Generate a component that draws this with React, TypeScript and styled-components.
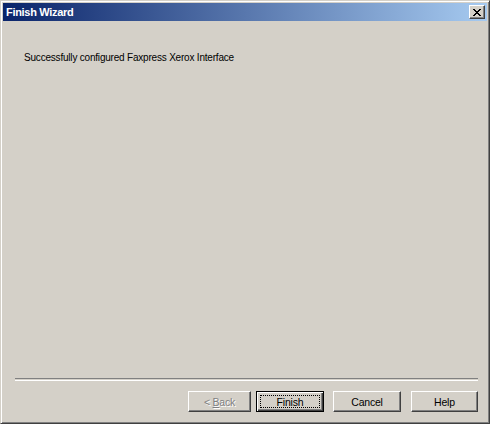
import * as React from "react";
import styled, { createGlobalStyle, css } from "styled-components";

const GlobalStyle = createGlobalStyle`
  html, body {
    margin: 0;
    padding: 0;
    background: #ffffff;
  }
  body {
    font-family: "Liberation Sans", Arial, sans-serif;
    font-size: 10px;
    letter-spacing: -0.2px;
  }
`;

const Window = styled.div`
  box-sizing: border-box;
  width: 490px;
  height: 424px;
  display: flex;
  flex-direction: column;
  background: #d4d0c8;
  border: 1px solid;
  border-color: #d4d0c8 #404040 #404040 #d4d0c8;
  box-shadow: inset 1px 1px #ffffff, inset -1px -1px #808080;
  padding: 2px;
`;

const TitleBar = styled.div`
  height: 18px;
  display: flex;
  align-items: center;
  justify-content: space-between;
  padding: 0 2px 0 3px;
  background: linear-gradient(to right, #0a246a, #a6caf0);
`;

const Title = styled.span`
  color: #ffffff;
  font-weight: bold;
  font-size: 11px;
  letter-spacing: -0.3px;
`;

const CloseButton = styled.div`
  box-sizing: border-box;
  width: 16px;
  height: 14px;
  display: flex;
  align-items: center;
  justify-content: center;
  background: #d4d0c8;
  border: 1px solid;
  border-color: #ffffff #404040 #404040 #ffffff;
  box-shadow: inset -1px -1px #808080;
`;

const Content = styled.div`
  flex: 1;
  padding: 30px 21px 0;
`;

const Message = styled.div`
  color: #000000;
  font-size: 10px;
  line-height: 13px;
`;

const Separator = styled.div`
  margin: 0 9px 0 12px;
  height: 1px;
  border-top: 1px solid #808080;
  border-bottom: 1px solid #ffffff;
`;

const ButtonRow = styled.div`
  display: flex;
  justify-content: flex-end;
  padding: 10px 9px 9px 0;
`;

const Button = styled.div<{ $width: number; $gap?: number; $default?: boolean; $disabled?: boolean }>`
  box-sizing: border-box;
  width: ${(p) => p.$width}px;
  height: 21px;
  margin-left: ${(p) => p.$gap ?? 0}px;
  display: flex;
  align-items: center;
  justify-content: center;
  background: #d4d0c8;
  font-size: 10.5px;
  color: #000000;
  white-space: pre;
  border: 1px solid;
  border-color: #ffffff #404040 #404040 #ffffff;
  box-shadow: inset -1px -1px #808080;
  ${(p) =>
    p.$default &&
    css`
      border-color: #000000;
      box-shadow: inset 1px 1px #ffffff, inset -1px -1px #404040, inset -2px -2px #808080;
    `}
  ${(p) =>
    p.$disabled &&
    css`
      color: #808080;
      text-shadow: 1px 1px #ffffff;
    `}
`;

const FocusRing = styled.span`
  box-sizing: border-box;
  display: flex;
  align-items: center;
  justify-content: center;
  width: calc(100% - 6px);
  height: calc(100% - 6px);
  border: 1px dotted #000000;
`;

const CloseIcon = () => (
  <svg width="8" height="7" viewBox="0 0 8 7" shapeRendering="crispEdges">
    <path
      d="M0 0h2v1H0zM6 0h2v1H6zM1 1h2v1H1zM5 1h2v1H5zM2 2h4v1H2zM3 3h2v1H3zM2 4h4v1H2zM1 5h2v1H1zM5 5h2v1H5zM0 6h2v1H0zM6 6h2v1H6z"
      fill="#000000"
    />
  </svg>
);

export default function App() {
  return (
    <>
      <GlobalStyle />
      <Window>
        <TitleBar>
          <Title>Finish Wizard</Title>
          <CloseButton>
            <CloseIcon />
          </CloseButton>
        </TitleBar>
        <Content>
          <Message>Successfully configured Faxpress Xerox Interface</Message>
        </Content>
        <Separator />
        <ButtonRow>
          <Button $width={63} $disabled>
            {"< "}
            <u>B</u>ack
          </Button>
          <Button $width={68} $gap={5} $default>
            <FocusRing>Finish</FocusRing>
          </Button>
          <Button $width={68} $gap={9}>
            Cancel
          </Button>
          <Button $width={67} $gap={10}>
            Help
          </Button>
        </ButtonRow>
      </Window>
    </>
  );
}
